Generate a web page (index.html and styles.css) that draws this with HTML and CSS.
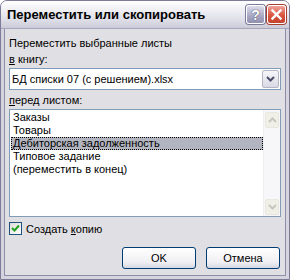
FILE: index.html
```html
<!DOCTYPE html>
<html lang="ru">
<head>
    <meta charset="UTF-8">
    <title>Переместить или скопировать</title>
    <link rel="stylesheet" href="styles.css">
</head>
<body>
    <div class="window">
        <!-- Title bar -->
        <div class="titlebar">
            <span class="title">Переместить или скопировать</span>
            <div class="controls">
                <span class="ctl help">?</span>
                <span class="ctl close">
                    <svg width="13" height="13" viewBox="0 0 13 13">
                        <path d="M2.5 2.5 L10.5 10.5 M10.5 2.5 L2.5 10.5" stroke="#fff" stroke-width="2.4" stroke-linecap="square"/>
                    </svg>
                </span>
            </div>
        </div>

        <div class="content">
            <div class="label">Переместить выбранные листы</div>
            <div class="label gap-sm"><u>в</u> книгу:</div>

            <!-- Book combobox -->
            <div class="combo">
                <span class="combo-text">БД списки 07 (с решением).xlsx</span>
                <span class="drop">
                    <svg width="9" height="6" viewBox="0 0 9 6">
                        <path d="M1 1 L4.5 4.5 L8 1" fill="none" stroke="#4d4d6b" stroke-width="2"/>
                    </svg>
                </span>
            </div>

            <div class="label gap-md"><u>п</u>еред листом:</div>

            <!-- Sheet list -->
            <div class="listbox">
                <ul class="items">
                    <li>Заказы</li>
                    <li>Товары</li>
                    <li class="selected">Дебиторская задолженность</li>
                    <li>Типовое задание</li>
                    <li>(переместить в конец)</li>
                </ul>
                <div class="scrollbar">
                    <span class="arrow">
                        <svg width="9" height="6" viewBox="0 0 9 6">
                            <path d="M1 5 L4.5 1.5 L8 5" fill="none" stroke="#c9c7ba" stroke-width="2"/>
                        </svg>
                    </span>
                    <span class="arrow">
                        <svg width="9" height="6" viewBox="0 0 9 6">
                            <path d="M1 1 L4.5 4.5 L8 1" fill="none" stroke="#c9c7ba" stroke-width="2"/>
                        </svg>
                    </span>
                </div>
            </div>

            <!-- Copy checkbox -->
            <div class="check">
                <span class="box">
                    <svg width="9" height="9" viewBox="0 0 9 9">
                        <path d="M1 4 L3.5 6.5 L8 1.5" fill="none" stroke="#21a121" stroke-width="2"/>
                    </svg>
                </span>
                <span>Создать <u>к</u>опию</span>
            </div>

            <div class="buttons">
                <span class="btn">OK</span>
                <span class="btn">Отмена</span>
            </div>
        </div>
    </div>
</body>
</html>
```

FILE: styles.css
```css
/* Windows XP silver dialog */
body {
    margin: 0;
    padding: 0;
    background-color: #ffffff;
    font-family: "Liberation Sans", Arial, sans-serif;
    font-size: 11px;
    color: #000;
}

.window {
    width: 290px;
    height: 280px;
    box-sizing: border-box;
    border: 1px solid #7d7c98;
    border-radius: 7px 7px 0 0;
    background-color: #e0dfe3;
    display: flex;
    flex-direction: column;
    overflow: hidden;
}

.titlebar {
    height: 27px;
    display: flex;
    align-items: center;
    justify-content: space-between;
    padding: 0 3px 0 6px;
    background: linear-gradient(#ffffff 0%, #f3f3f7 25%, #dedee8 70%, #cbcbd8 100%);
    border-bottom: 1px solid #a7a6be;
}

.title {
    font-weight: bold;
    font-size: 13px;
    color: #000;
}

.controls {
    display: flex;
    gap: 2px;
}

.ctl {
    width: 19px;
    height: 19px;
    box-sizing: border-box;
    border-radius: 3px;
    border: 1px solid #ffffff;
    display: flex;
    align-items: center;
    justify-content: center;
}

.help {
    background: linear-gradient(#dcdcea, #a7a7c4 60%, #9090b0);
    color: #fff;
    font-weight: bold;
    font-size: 14px;
    text-shadow: 0 0 1px #4a4a6a, 0 0 1px #4a4a6a;
    box-shadow: 0 0 0 1px #7a7a99;
}

.close {
    background: linear-gradient(#f0a39a, #d8553f 55%, #c4432e);
    box-shadow: 0 0 0 1px #a4402f;
}

.content {
    flex: 1;
    padding: 8px 5px 0 5px;
    border: 3px solid #d4d3de;
    border-top: 0;
    box-shadow: inset 1px 0 0 #8f8ea8, inset -1px 0 0 #8f8ea8, inset 0 -1px 0 #8f8ea8;
}

.label {
    height: 13px;
    line-height: 13px;
}

.gap-sm {
    margin-top: 3px;
}

.gap-md {
    margin-top: 4px;
}

/* Combobox */
.combo {
    margin-top: 2px;
    height: 22px;
    box-sizing: border-box;
    border: 1px solid #7f9db9;
    background-color: #fff;
    display: flex;
    align-items: center;
    justify-content: space-between;
    padding: 0 1px 0 2px;
}

.drop {
    width: 17px;
    height: 18px;
    box-sizing: border-box;
    border: 1px solid #b7b6c6;
    border-radius: 2px;
    background: linear-gradient(#f6f6fa, #d9d9e4);
    display: flex;
    align-items: center;
    justify-content: center;
}

/* List */
.listbox {
    margin-top: 2px;
    height: 108px;
    box-sizing: border-box;
    border: 1px solid #7f9db9;
    background-color: #fff;
    display: flex;
}

.items {
    list-style: none;
    margin: 0;
    padding: 1px 0 0 1px;
    flex: 1;
}

.items li {
    height: 13px;
    line-height: 13px;
    padding-left: 2px;
    white-space: nowrap;
}

.items li.selected {
    background-color: #b2b4bf;
    outline: 1px dotted #000;
    outline-offset: -1px;
}

.scrollbar {
    width: 17px;
    box-sizing: border-box;
    background-color: #f7f7f9;
    border-left: 1px solid #eeeef2;
    display: flex;
    flex-direction: column;
    justify-content: space-between;
    padding: 2px 1px 1px 1px;
}

.arrow {
    height: 16px;
    box-sizing: border-box;
    border: 1px solid #e8e7e0;
    border-radius: 2px;
    background-color: #f0efe8;
    display: flex;
    align-items: center;
    justify-content: center;
}

/* Checkbox */
.check {
    margin-top: 5px;
    display: flex;
    align-items: center;
    gap: 4px;
    height: 13px;
}

.box {
    width: 13px;
    height: 13px;
    box-sizing: border-box;
    border: 1px solid #1c5180;
    background: linear-gradient(135deg, #dcdcd7, #ffffff);
    display: flex;
    align-items: center;
    justify-content: center;
}

/* Buttons */
.buttons {
    margin-top: 12px;
    display: flex;
    justify-content: flex-end;
    gap: 10px;
    padding-right: 1px;
}

.btn {
    width: 74px;
    height: 22px;
    box-sizing: border-box;
    border: 1px solid #003c74;
    border-radius: 3px;
    background: linear-gradient(#ffffff, #f0f0f4 70%, #d6d6e2);
    display: flex;
    align-items: center;
    justify-content: center;
}
```
